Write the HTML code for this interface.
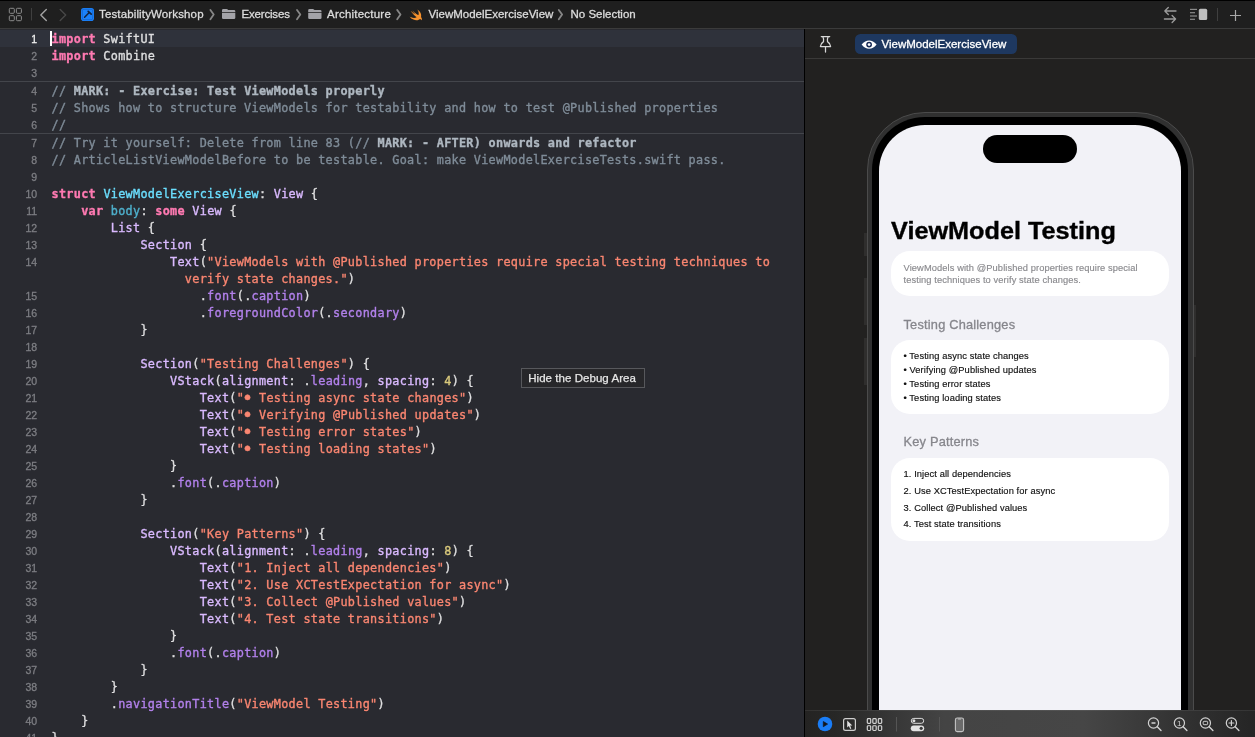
<!DOCTYPE html>
<html lang="en">
<head>
<meta charset="utf-8">
<title>ViewModelExerciseView.swift</title>
<style>
*{box-sizing:border-box;margin:0;padding:0}
html,body{width:1255px;height:737px;overflow:hidden;background:#292a30}
body{position:relative;font-family:"Liberation Sans",sans-serif;color:#dfdfe0;-webkit-font-smoothing:antialiased}
#root{position:absolute;left:0;top:0;width:1255px;height:737px;will-change:transform}
/* ---------- jump bar ---------- */
#topline{position:absolute;left:0;top:0;width:1255px;height:1px;background:#000}
#jump{position:absolute;left:0;top:1px;width:1255px;height:27px;background:#1f1f1f}
#jumpb{position:absolute;left:0;top:28px;width:1255px;height:1px;background:#3b3b3b}
.jt{position:absolute;top:6.5px;height:15px;line-height:15px;font-size:11.5px;color:#dcdcdc;white-space:nowrap;-webkit-text-stroke:0.3px #dcdcdc}
.jc{position:absolute;top:10px;width:5px;height:10px}
/* ---------- editor ---------- */
#editor{position:absolute;left:0;top:29px;width:804px;height:708px;background:#292a30;overflow:hidden}
#curline{position:absolute;left:0;top:30px;width:804px;height:17px;background:#2f323b}
.sep{position:absolute;left:0;width:804px;height:1px;background:#43454b}
#caret{position:absolute;left:50px;top:31px;width:2px;height:15px;background:#fff}
.ln{position:absolute;left:0;width:37.2px;-webkit-text-stroke:0.3px;height:17px;line-height:19px;text-align:right;font-size:10.5px;color:#7d7e83;white-space:nowrap}
.ln.cur{color:#f0f0f0}
.cl{position:absolute;left:51.5px;height:17px;line-height:19px;white-space:pre;font-family:"DejaVu Sans Mono","Liberation Mono",monospace;font-size:11.8px;letter-spacing:0.306px;color:#dfdfe0;-webkit-text-stroke:0.35px}
.bu{display:inline-block;transform:scale(1.55);transform-origin:50% 54%}
.k{color:#ff7ab2;font-weight:bold}
.t{color:#6bdfff}
.y{color:#dabaff}
.d{color:#4eb0cc}
.s{color:#fa8671}
.n{color:#d9c97c}
.f{color:#b281eb}
.c{color:#7f8c98}
.m{color:#aeb7c0;font-weight:bold}
#tip{position:absolute;left:521px;top:368px;width:124px;height:19.5px;background:#27272a;border:1px solid #57585c;color:#e6e6e6;font-size:11.5px;letter-spacing:0.05px;line-height:18.5px;padding-left:6.2px;white-space:nowrap;-webkit-text-stroke:0.25px #e6e6e6}
/* ---------- canvas ---------- */
#vdiv{position:absolute;left:804px;top:29px;width:1px;height:708px;background:#000}
#canvas{position:absolute;left:805px;top:29px;width:450px;height:708px;background:#222120;overflow:hidden}
#ctb{position:absolute;left:805px;top:58px;width:450px;height:1px;background:#3a3938}
#pill{position:absolute;left:855px;top:34.2px;width:162px;height:19.6px;border-radius:5.5px;background:#1e3860}
#pilltxt{position:absolute;left:881.5px;top:36.5px;height:15px;line-height:15px;font-size:11.5px;color:#fff;white-space:nowrap;-webkit-text-stroke:0.3px #fff}
/* phone */
#ph-outer{position:absolute;left:867px;top:112px;width:326.5px;height:700px;border-radius:58px;background:#303030;border:1px solid #4b4b4b}
#ph-black{position:absolute;left:872px;top:117px;width:316px;height:700px;border-radius:53px;background:#000}
#ph-screen{position:absolute;left:879px;top:125px;width:302px;height:700px;border-radius:46px;background:#f2f2f7}
#island{position:absolute;left:983px;top:135px;width:94px;height:28px;border-radius:14px;background:#000}
.btn{position:absolute;width:3px;background:#2f2e2d}
#ptitle{position:absolute;left:891.4px;top:214.5px;height:32px;line-height:32px;font-size:23.5px;font-weight:bold;color:#000;white-space:nowrap;transform-origin:0 0;transform:scaleX(1.074);-webkit-text-stroke:0.35px #000}
.card{position:absolute;left:891px;width:278px;background:#fff;border-radius:19px}
.hdr{position:absolute;left:903.5px;height:16px;line-height:16px;font-size:12.8px;color:#86868c;white-space:nowrap;letter-spacing:0.2px;-webkit-text-stroke:0.3px #86868c}
.pt{position:absolute;left:903.5px;height:12px;line-height:12px;font-size:9.3px;color:#111;white-space:nowrap;letter-spacing:0.1px;-webkit-text-stroke:0.15px}
.pt.g{color:#8a8a8e}
/* bottom bar */
#bbar{position:absolute;left:805px;top:710px;width:450px;height:27px;background:linear-gradient(90deg,#242322 0%,#272726 7%,#363636 19%,#444444 31%,#464646 62%,#303030 86%,#252525 100%)}
#bbart{position:absolute;left:805px;top:710px;width:450px;height:1px;background:rgba(255,255,255,0.07)}
svg{position:absolute;overflow:visible}
.z1{font-family:"Liberation Sans",sans-serif;font-size:8px}
</style>
</head>
<body>
<div id="root">
<div id="editor"></div>
<div id="curline"></div>
<div class="sep" style="top:81px"></div>
<div class="sep" style="top:133px"></div>
<div id="caret"></div>
<div class="ln cur" style="top:30px">1</div>
<div class="cl" style="top:30px"><span class="k">import</span> SwiftUI</div>
<div class="ln" style="top:47px">2</div>
<div class="cl" style="top:47px"><span class="k">import</span> Combine</div>
<div class="ln" style="top:64px">3</div>
<div class="ln" style="top:82px">4</div>
<div class="cl" style="top:82px"><span class="c">// </span><span class="m">MARK: - Exercise: Test ViewModels properly</span></div>
<div class="ln" style="top:99px">5</div>
<div class="cl" style="top:99px"><span class="c">// Shows how to structure ViewModels for testability and how to test @Published properties</span></div>
<div class="ln" style="top:116px">6</div>
<div class="cl" style="top:116px"><span class="c">//</span></div>
<div class="ln" style="top:134px">7</div>
<div class="cl" style="top:134px"><span class="c">// Try it yourself: Delete from line 83 (// </span><span class="m">MARK: - AFTER) onwards and refactor</span></div>
<div class="ln" style="top:151px">8</div>
<div class="cl" style="top:151px"><span class="c">// ArticleListViewModelBefore to be testable. Goal: make ViewModelExerciseTests.swift pass.</span></div>
<div class="ln" style="top:168px">9</div>
<div class="ln" style="top:185px">10</div>
<div class="cl" style="top:185px"><span class="k">struct</span> <span class="t">ViewModelExerciseView</span>: <span class="y">View</span> {</div>
<div class="ln" style="top:202px">11</div>
<div class="cl" style="top:202px">    <span class="k">var</span> <span class="d">body</span>: <span class="k">some</span> <span class="y">View</span> {</div>
<div class="ln" style="top:219px">12</div>
<div class="cl" style="top:219px">        <span class="y">List</span> {</div>
<div class="ln" style="top:236px">13</div>
<div class="cl" style="top:236px">            <span class="y">Section</span> {</div>
<div class="ln" style="top:253px">14</div>
<div class="cl" style="top:253px">                <span class="y">Text</span>(<span class="s">"ViewModels with @Published properties require special testing techniques to</span></div>
<div class="cl" style="top:270px">                  <span class="s">verify state changes."</span>)</div>
<div class="ln" style="top:287px">15</div>
<div class="cl" style="top:287px">                    .<span class="f">font</span>(.<span class="f">caption</span>)</div>
<div class="ln" style="top:304px">16</div>
<div class="cl" style="top:304px">                    .<span class="f">foregroundColor</span>(.<span class="f">secondary</span>)</div>
<div class="ln" style="top:321px">17</div>
<div class="cl" style="top:321px">            }</div>
<div class="ln" style="top:338px">18</div>
<div class="ln" style="top:355px">19</div>
<div class="cl" style="top:355px">            <span class="y">Section</span>(<span class="s">"Testing Challenges"</span>) {</div>
<div class="ln" style="top:372px">20</div>
<div class="cl" style="top:372px">                <span class="y">VStack</span>(<span class="y">alignment</span>: .<span class="f">leading</span>, <span class="y">spacing</span>: <span class="n">4</span>) {</div>
<div class="ln" style="top:389px">21</div>
<div class="cl" style="top:389px">                    <span class="y">Text</span>(<span class="s">"<span class="bu">•</span> Testing async state changes"</span>)</div>
<div class="ln" style="top:406px">22</div>
<div class="cl" style="top:406px">                    <span class="y">Text</span>(<span class="s">"<span class="bu">•</span> Verifying @Published updates"</span>)</div>
<div class="ln" style="top:423px">23</div>
<div class="cl" style="top:423px">                    <span class="y">Text</span>(<span class="s">"<span class="bu">•</span> Testing error states"</span>)</div>
<div class="ln" style="top:440px">24</div>
<div class="cl" style="top:440px">                    <span class="y">Text</span>(<span class="s">"<span class="bu">•</span> Testing loading states"</span>)</div>
<div class="ln" style="top:457px">25</div>
<div class="cl" style="top:457px">                }</div>
<div class="ln" style="top:474px">26</div>
<div class="cl" style="top:474px">                .<span class="f">font</span>(.<span class="f">caption</span>)</div>
<div class="ln" style="top:491px">27</div>
<div class="cl" style="top:491px">            }</div>
<div class="ln" style="top:508px">28</div>
<div class="ln" style="top:525px">29</div>
<div class="cl" style="top:525px">            <span class="y">Section</span>(<span class="s">"Key Patterns"</span>) {</div>
<div class="ln" style="top:542px">30</div>
<div class="cl" style="top:542px">                <span class="y">VStack</span>(<span class="y">alignment</span>: .<span class="f">leading</span>, <span class="y">spacing</span>: <span class="n">8</span>) {</div>
<div class="ln" style="top:559px">31</div>
<div class="cl" style="top:559px">                    <span class="y">Text</span>(<span class="s">"1. Inject all dependencies"</span>)</div>
<div class="ln" style="top:576px">32</div>
<div class="cl" style="top:576px">                    <span class="y">Text</span>(<span class="s">"2. Use XCTestExpectation for async"</span>)</div>
<div class="ln" style="top:593px">33</div>
<div class="cl" style="top:593px">                    <span class="y">Text</span>(<span class="s">"3. Collect @Published values"</span>)</div>
<div class="ln" style="top:610px">34</div>
<div class="cl" style="top:610px">                    <span class="y">Text</span>(<span class="s">"4. Test state transitions"</span>)</div>
<div class="ln" style="top:627px">35</div>
<div class="cl" style="top:627px">                }</div>
<div class="ln" style="top:644px">36</div>
<div class="cl" style="top:644px">                .<span class="f">font</span>(.<span class="f">caption</span>)</div>
<div class="ln" style="top:661px">37</div>
<div class="cl" style="top:661px">            }</div>
<div class="ln" style="top:678px">38</div>
<div class="cl" style="top:678px">        }</div>
<div class="ln" style="top:695px">39</div>
<div class="cl" style="top:695px">        .<span class="f">navigationTitle</span>(<span class="s">"ViewModel Testing"</span>)</div>
<div class="ln" style="top:712px">40</div>
<div class="cl" style="top:712px">    }</div>
<div class="ln" style="top:729px">41</div>
<div class="cl" style="top:729px">}</div>
<div id="tip">Hide the Debug Area</div>

<!-- jump bar -->
<div id="jump"></div>
<div id="topline"></div>
<div id="jumpb"></div>
<svg width="1255" height="29" style="left:0;top:0" viewBox="0 0 1255 29">
<g fill="none" stroke="#8d8d8d" stroke-width="1">
<rect x="9.3" y="8.3" width="5" height="5" rx="1"/><rect x="16.4" y="8.3" width="5" height="5" rx="1"/>
<rect x="9.3" y="15.7" width="5" height="5" rx="1"/><rect x="16.4" y="15.7" width="5" height="5" rx="1"/>
</g>
<rect x="31" y="8" width="1" height="12.5" fill="#3f3f3f"/>
<path d="M46.3 9.6 L40.8 15 L46.3 20.4" fill="none" stroke="#a3a3a3" stroke-width="1.4" stroke-linecap="round" stroke-linejoin="round"/>
<path d="M60.2 9.6 L65.7 15 L60.2 20.4" fill="none" stroke="#484848" stroke-width="1.4" stroke-linecap="round" stroke-linejoin="round"/>
<rect x="81" y="8" width="13" height="13" rx="2.8" fill="#1b82fb"/>
<rect x="82.3" y="9.3" width="10.4" height="10.4" rx="1.6" fill="none" stroke="#1563c9" stroke-width="0.8"/>
<path d="M84.6 17.2 L89 12.8" stroke="#14233d" stroke-width="1.5" stroke-linecap="round"/>
<path d="M88.2 11.3 L91.2 14.2" stroke="#14233d" stroke-width="1.7" stroke-linecap="round"/>
<path d="M210.4 10 L213.70000000000002 14.6 L210.4 19.2" fill="none" stroke="#878787" stroke-width="1.8" stroke-linecap="round" stroke-linejoin="round"/>
<g transform="translate(222,0)" fill="#a3a3a8">
<path d="M0 10.3 Q0 8.9 1.3 8.9 H4.6 Q5.3 8.9 5.8 9.5 L6.2 9.9 H12 Q13.3 9.9 13.3 11.2 V11.9 H0 Z"/>
<path d="M0 12.7 H13.3 V17.7 Q13.3 19.1 12 19.1 H1.3 Q0 19.1 0 17.7 Z"/>
</g>
<path d="M297 10 L300.3 14.6 L297 19.2" fill="none" stroke="#878787" stroke-width="1.8" stroke-linecap="round" stroke-linejoin="round"/>
<g transform="translate(308.2,0)" fill="#a3a3a8">
<path d="M0 10.3 Q0 8.9 1.3 8.9 H4.6 Q5.3 8.9 5.8 9.5 L6.2 9.9 H12 Q13.3 9.9 13.3 11.2 V11.9 H0 Z"/>
<path d="M0 12.7 H13.3 V17.7 Q13.3 19.1 12 19.1 H1.3 Q0 19.1 0 17.7 Z"/>
</g>
<path d="M397.2 10 L400.5 14.6 L397.2 19.2" fill="none" stroke="#878787" stroke-width="1.8" stroke-linecap="round" stroke-linejoin="round"/>
<g transform="translate(407.9,7.2) scale(0.69,0.665)"><path d="M13.543 3.41c4.114 2.47 6.545 7.162 5.549 11.131-.024.093-.05.181-.076.272l.002.001c2.062 2.538 1.5 5.258 1.236 4.745-1.072-2.086-3.066-1.568-4.088-1.043a6.803 6.803 0 0 1-.281.158l-.02.012-.002.002c-2.115 1.123-4.957 1.205-7.812-.022a12.568 12.568 0 0 1-5.64-4.838c.649.48 1.35.902 2.097 1.252 3.019 1.414 6.051 1.311 8.197-.002C9.651 12.73 7.101 9.67 5.146 7.191a10.628 10.628 0 0 1-1.005-1.384c2.34 2.142 6.038 4.83 7.365 5.576C8.69 8.408 6.208 4.743 6.324 4.86c4.436 4.47 8.528 6.996 8.528 6.996.154.085.27.154.36.213.085-.215.16-.437.224-.668.708-2.588-.09-5.548-1.893-7.992z" fill="#f6922e"/></g>
<path d="M558.8 10 L562.0999999999999 14.6 L558.8 19.2" fill="none" stroke="#878787" stroke-width="1.8" stroke-linecap="round" stroke-linejoin="round"/>
<g fill="none" stroke="#9c9c9c" stroke-width="1.3" stroke-linecap="round" stroke-linejoin="round">
<path d="M1176 11 H1164.8 M1168.3 7.5 L1164.8 11 L1168.3 14.5"/>
<path d="M1164.4 19 H1175.6 M1172.1 15.5 L1175.6 19 L1172.1 22.5"/>
</g>
<g fill="#8a8a8a">
<rect x="1190" y="8.8" width="7" height="1.2"/><rect x="1190" y="12.1" width="5" height="1.2"/><rect x="1190" y="15.4" width="7" height="1.2"/><rect x="1190" y="18.7" width="5" height="1.2"/>
</g>
<rect x="1198.8" y="8.8" width="8.4" height="11.2" rx="1.6" fill="#bdbdbd"/>
<rect x="1217" y="8" width="1" height="13" fill="#3f3f3f"/>
<path d="M1230 15.5 H1241 M1235.5 10 V21" stroke="#a8a8a8" stroke-width="1.2" fill="none"/>
</svg>
<div class="jt" style="left:99px;letter-spacing:0.139px">TestabilityWorkshop</div>
<div class="jt" style="left:241.5px;letter-spacing:-0.183px">Exercises</div>
<div class="jt" style="left:327px;letter-spacing:0.22px">Architecture</div>
<div class="jt" style="left:428.5px">ViewModelExerciseView</div>
<div class="jt" style="left:570.5px">No Selection</div>

<!-- canvas -->
<div id="canvas"></div>
<div id="vdiv"></div>
<div id="ctb"></div>
<div id="pill"></div>
<div id="pilltxt">ViewModelExerciseView</div>
<svg width="450" height="30" style="left:805px;top:29px" viewBox="805 29 450 30">
<g fill="none" stroke="#d8d8d8" stroke-width="1.25" stroke-linejoin="round" stroke-linecap="round">
<path d="M821.3 36.5 H829.7"/>
<path d="M822.8 36.6 C823.6 38.3 823.8 40 823.5 41.6 C822.2 42.4 820.6 44 820.4 46.5 H830.6 C830.4 44 828.8 42.4 827.5 41.6 C827.2 40 827.4 38.3 828.2 36.6"/>
<path d="M825.5 46.8 V52"/>
</g>
<path d="M861.6 44.6 C864 41.6 866.4 40.4 869.1 40.4 C871.8 40.4 874.2 41.6 876.6 44.6 C874.2 47.6 871.8 48.8 869.1 48.8 C866.4 48.8 864 47.6 861.6 44.6 Z" fill="#fff"/>
<circle cx="869.1" cy="44.6" r="2.9" fill="#172a55"/>
<circle cx="869.1" cy="44.6" r="1.4" fill="#fff"/>
</svg>

<div class="btn" style="left:864px;top:233px;height:23px"></div>
<div class="btn" style="left:864px;top:278px;height:47px"></div>
<div class="btn" style="left:864px;top:338px;height:47px"></div>
<div class="btn" style="left:1193px;top:305px;height:52px"></div>
<div id="ph-outer"></div>
<div id="ph-black"></div>
<div id="ph-screen"></div>
<div id="island"></div>
<div id="ptitle">ViewModel Testing</div>

<div class="card" style="top:251px;height:45px"></div>
<div class="pt g" style="top:261.5px">ViewModels with @Published properties require special</div>
<div class="pt g" style="top:273.5px">testing techniques to verify state changes.</div>

<div class="hdr" style="top:316.5px">Testing Challenges</div>
<div class="card" style="top:340px;height:74px"></div>
<div class="pt" style="top:350px">• Testing async state changes</div>
<div class="pt" style="top:364.3px">• Verifying @Published updates</div>
<div class="pt" style="top:378.2px">• Testing error states</div>
<div class="pt" style="top:392px">• Testing loading states</div>

<div class="hdr" style="top:434px">Key Patterns</div>
<div class="card" style="top:457.5px;height:83px"></div>
<div class="pt" style="top:468px">1. Inject all dependencies</div>
<div class="pt" style="top:485px">2. Use XCTestExpectation for async</div>
<div class="pt" style="top:501.6px">3. Collect @Published values</div>
<div class="pt" style="top:518.2px">4. Test state transitions</div>

<div id="bbar"></div>
<div id="bbart"></div>
<svg width="450" height="27" style="left:805px;top:710px" viewBox="805 710 450 27">
<circle cx="825" cy="724" r="7.3" fill="#1a7df6"/>
<path d="M823.3 721.5 L827.6 724.1 L823.3 726.7 Z" fill="#14161c" stroke="#14161c" stroke-width="0.7" stroke-linejoin="round"/>
<rect x="843.6" y="718.7" width="11.8" height="11.7" rx="1.9" fill="none" stroke="#cfcfcf" stroke-width="1.2"/>
<path d="M847.2 720.5 L847.2 727.4 L848.9 726 L850.2 729 L851.3 728.5 L850.1 725.6 L852.3 725.5 Z" fill="#e0e0e0"/>
<g fill="none" stroke="#d6d6d6" stroke-width="1.15">
<rect x="867.3" y="718.6" width="3.4" height="4.8" rx="0.9"/><rect x="872.8" y="718.6" width="3.4" height="4.8" rx="0.9"/><rect x="878.3" y="718.6" width="3.4" height="4.8" rx="0.9"/>
<rect x="867.3" y="725.7" width="3.4" height="4.8" rx="0.9"/><rect x="872.8" y="725.7" width="3.4" height="4.8" rx="0.9"/><rect x="878.3" y="725.7" width="3.4" height="4.8" rx="0.9"/>
</g>
<rect x="896" y="717" width="1" height="14.5" fill="#555"/>
<rect x="911.3" y="718.4" width="12.4" height="4.9" rx="2.45" fill="none" stroke="#dcdcdc" stroke-width="1"/>
<circle cx="913.9" cy="720.85" r="1.5" fill="#dcdcdc"/>
<rect x="910.8" y="725.4" width="13.4" height="5.8" rx="2.9" fill="#e2e2e2"/>
<circle cx="921.2" cy="728.3" r="1.6" fill="#3a3a3a"/>
<rect x="939" y="717" width="1" height="14.5" fill="#555"/>
<rect x="955.4" y="718" width="8.2" height="13.6" rx="1.9" fill="#6b6b6b" stroke="#c4c4c4" stroke-width="1.1"/>
<rect x="958" y="718.6" width="3" height="1" rx="0.5" fill="#c4c4c4"/>
<circle cx="1153.5" cy="723" r="5.1" fill="none" stroke="#d2d2d2" stroke-width="1.2"/>
<path d="M1157.3 726.8 L1161.0 730.6" stroke="#d2d2d2" stroke-width="1.4" stroke-linecap="round"/><rect x="1151.3" y="722.3" width="4.4" height="1.4" rx="0.7" fill="#d2d2d2"/>
<circle cx="1179.4" cy="723" r="5.1" fill="none" stroke="#d2d2d2" stroke-width="1.2"/>
<path d="M1183.2 726.8 L1186.9 730.6" stroke="#d2d2d2" stroke-width="1.4" stroke-linecap="round"/><text class="z1" x="1179.2" y="725.8" fill="#d2d2d2" text-anchor="middle">1</text>
<circle cx="1205.4" cy="723" r="5.1" fill="none" stroke="#d2d2d2" stroke-width="1.2"/>
<path d="M1209.2 726.8 L1212.9 730.6" stroke="#d2d2d2" stroke-width="1.4" stroke-linecap="round"/><rect x="1203.2" y="721.3" width="4.4" height="3.4" rx="0.9" fill="none" stroke="#d2d2d2" stroke-width="1"/>
<circle cx="1231.4" cy="723" r="5.1" fill="none" stroke="#d2d2d2" stroke-width="1.2"/>
<path d="M1235.2 726.8 L1238.9 730.6" stroke="#d2d2d2" stroke-width="1.4" stroke-linecap="round"/><path d="M1229 723 H1233.8 M1231.4 720.6 V725.4" stroke="#d2d2d2" stroke-width="1.2" stroke-linecap="round"/>
</svg>
</div>
</body>
</html>
